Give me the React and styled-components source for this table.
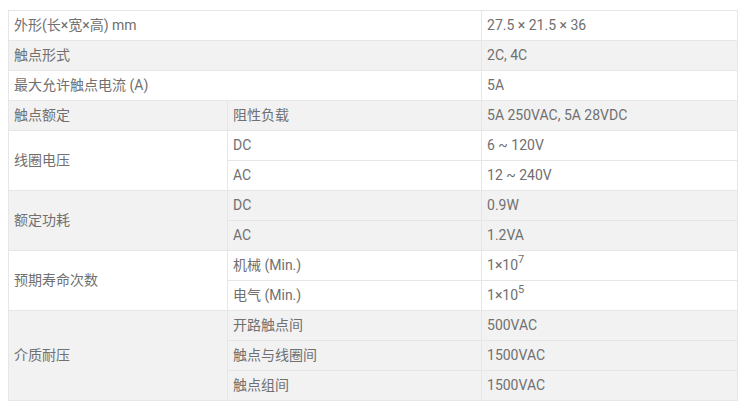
import React from "react";
import styled, { createGlobalStyle } from "styled-components";

const GlobalStyle = createGlobalStyle`
  body {
    margin: 0;
    padding: 10px 8px;
    background: #fff;
    font-family: Roboto, "Noto Sans CJK SC", sans-serif;
  }
`;

const SpecTable = styled.table`
  width: 729px;
  border-collapse: collapse;
  table-layout: fixed;
  font-size: 14px;
  color: #707070;
`;

const Row = styled.tr`
  background: ${(p) => (p.$shade ? "#f2f2f2" : "#fff")};
`;

const Cell = styled.td`
  height: 30px;
  box-sizing: border-box;
  padding: 0 5px 2px;
  border: 1px solid #e6e6e6;
  vertical-align: middle;
  white-space: nowrap;
  line-height: 1;
`;

const Sup = styled.sup`
  font-size: 11px;
  vertical-align: 7px;
  line-height: 0;
`;

export default function App() {
  return (
    <>
      <GlobalStyle />
      <SpecTable>
        <colgroup>
          <col style={{ width: 219 }} />
          <col style={{ width: 254 }} />
          <col style={{ width: 256 }} />
        </colgroup>
        <tbody>
          <Row>
            <Cell colSpan={2}>外形(长×宽×高) mm</Cell>
            <Cell>27.5 × 21.5 × 36</Cell>
          </Row>
          <Row $shade>
            <Cell colSpan={2}>触点形式</Cell>
            <Cell>2C, 4C</Cell>
          </Row>
          <Row>
            <Cell colSpan={2}>最大允许触点电流 (A)</Cell>
            <Cell>5A</Cell>
          </Row>
          <Row $shade>
            <Cell>触点额定</Cell>
            <Cell>阻性负载</Cell>
            <Cell>5A 250VAC, 5A 28VDC</Cell>
          </Row>
          <Row>
            <Cell rowSpan={2}>线圈电压</Cell>
            <Cell>DC</Cell>
            <Cell>6 ~ 120V</Cell>
          </Row>
          <Row>
            <Cell>AC</Cell>
            <Cell>12 ~ 240V</Cell>
          </Row>
          <Row $shade>
            <Cell rowSpan={2}>额定功耗</Cell>
            <Cell>DC</Cell>
            <Cell>0.9W</Cell>
          </Row>
          <Row $shade>
            <Cell>AC</Cell>
            <Cell>1.2VA</Cell>
          </Row>
          <Row>
            <Cell rowSpan={2}>预期寿命次数</Cell>
            <Cell>机械 (Min.)</Cell>
            <Cell>
              1×10<Sup>7</Sup>
            </Cell>
          </Row>
          <Row>
            <Cell>电气 (Min.)</Cell>
            <Cell>
              1×10<Sup>5</Sup>
            </Cell>
          </Row>
          <Row $shade>
            <Cell rowSpan={3}>介质耐压</Cell>
            <Cell>开路触点间</Cell>
            <Cell>500VAC</Cell>
          </Row>
          <Row $shade>
            <Cell>触点与线圈间</Cell>
            <Cell>1500VAC</Cell>
          </Row>
          <Row $shade>
            <Cell>触点组间</Cell>
            <Cell>1500VAC</Cell>
          </Row>
        </tbody>
      </SpecTable>
    </>
  );
}
